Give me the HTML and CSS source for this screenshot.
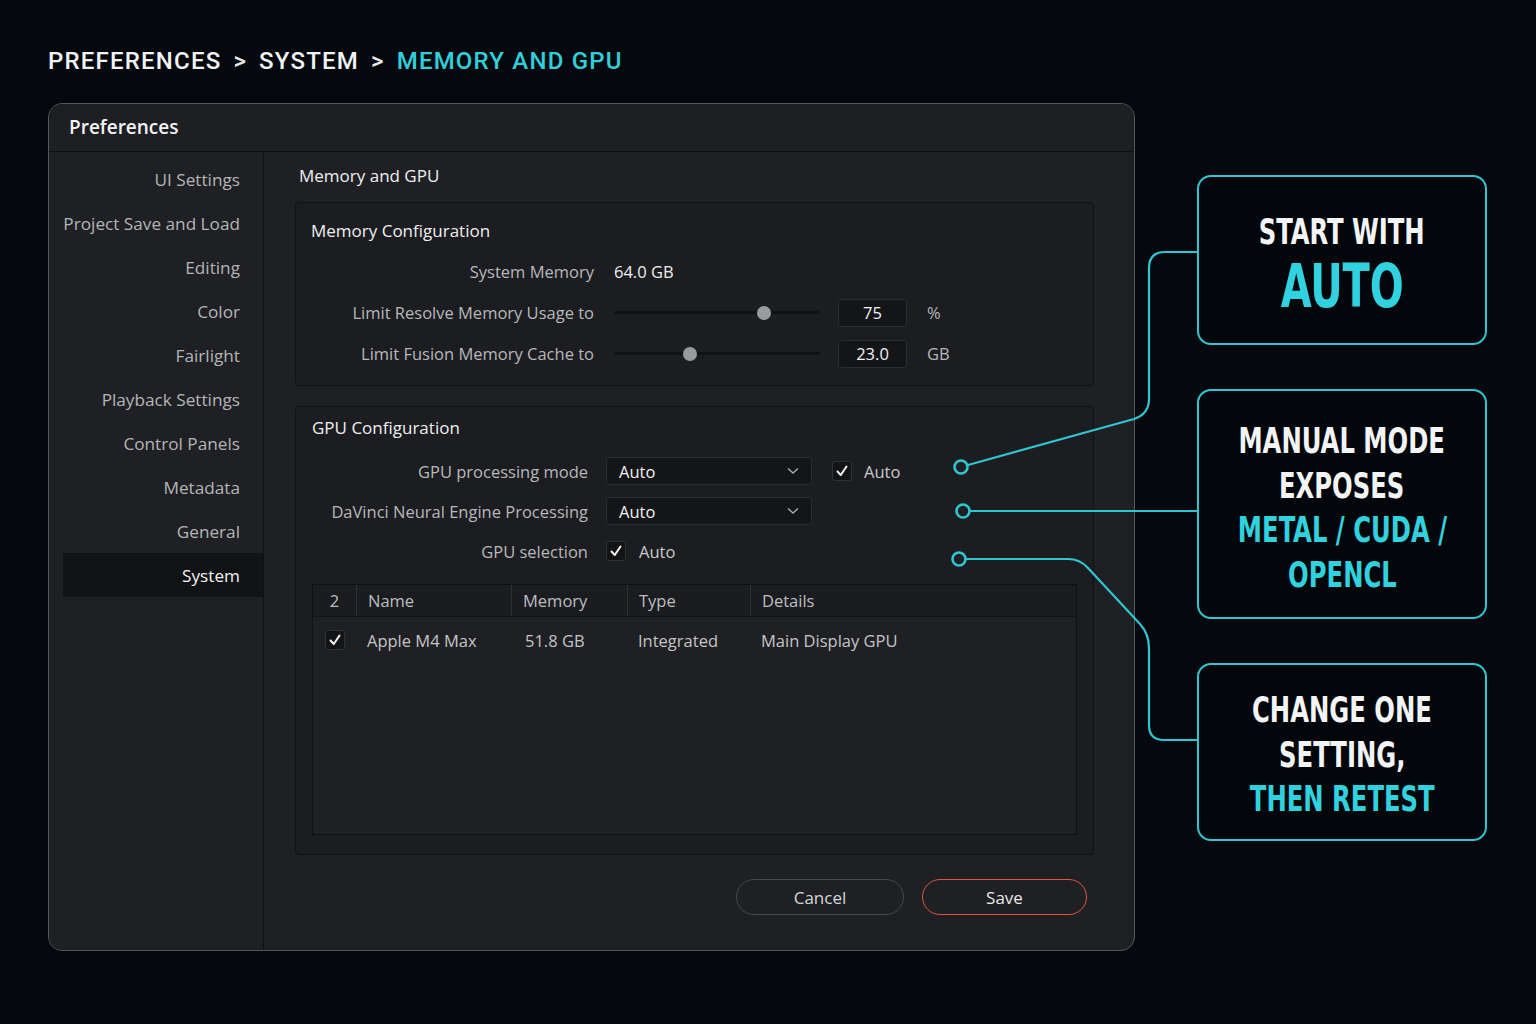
FILE: index.html
```html
<!DOCTYPE html>
<html lang="en">
<head>
<meta charset="utf-8">
<title>Preferences – Memory and GPU</title>
<link rel="stylesheet" href="styles.css">
</head>
<body>
<div class="page">
  <h1 class="crumbs">
    <span>PREFERENCES</span><span class="sep">&gt;</span><span>SYSTEM</span><span class="sep">&gt;</span><span class="current">MEMORY AND GPU</span>
  </h1>

  <div class="stage">
    <section class="dialog">
      <header class="dialog-title">Preferences</header>
      <div class="dialog-body">
        <nav class="sidebar">
          <div class="nav-item">UI Settings</div>
          <div class="nav-item">Project Save and Load</div>
          <div class="nav-item">Editing</div>
          <div class="nav-item">Color</div>
          <div class="nav-item">Fairlight</div>
          <div class="nav-item">Playback Settings</div>
          <div class="nav-item">Control Panels</div>
          <div class="nav-item">Metadata</div>
          <div class="nav-item">General</div>
          <div class="nav-item active">System</div>
        </nav>

        <main class="content">
          <h2 class="content-title">Memory and GPU</h2>

          <div class="group mem-group">
            <h3 class="group-title">Memory Configuration</h3>
            <div class="row mem-row">
              <span class="label">System Memory</span>
              <span class="value">64.0 GB</span>
            </div>
            <div class="row mem-row">
              <span class="label">Limit Resolve Memory Usage to</span>
              <div class="slider"><span class="thumb" style="left: 73%"></span></div>
              <span class="field">75</span>
              <span class="unit">%</span>
            </div>
            <div class="row mem-row">
              <span class="label">Limit Fusion Memory Cache to</span>
              <div class="slider"><span class="thumb" style="left: 37%"></span></div>
              <span class="field">23.0</span>
              <span class="unit">GB</span>
            </div>
          </div>

          <div class="group gpu-group">
            <h3 class="group-title">GPU Configuration</h3>
            <div class="row gpu-row">
              <span class="label">GPU processing mode</span>
              <div class="select"><span>Auto</span><svg class="chev" viewBox="0 0 12 8"><path d="M1 1.5 L6 6 L11 1.5"/></svg></div>
              <span class="check"><svg viewBox="0 0 14 14"><path d="M2.5 7.5 L5.8 11 L11.5 2.5"/></svg></span>
              <span class="check-label">Auto</span>
            </div>
            <div class="row gpu-row">
              <span class="label">DaVinci Neural Engine Processing</span>
              <div class="select"><span>Auto</span><svg class="chev" viewBox="0 0 12 8"><path d="M1 1.5 L6 6 L11 1.5"/></svg></div>
            </div>
            <div class="row gpu-row">
              <span class="label">GPU selection</span>
              <span class="check tight"><svg viewBox="0 0 14 14"><path d="M2.5 7.5 L5.8 11 L11.5 2.5"/></svg></span>
              <span class="check-label">Auto</span>
            </div>

            <div class="table">
              <div class="thead">
                <div class="cell c-idx">2</div>
                <div class="cell c-name">Name</div>
                <div class="cell c-mem">Memory</div>
                <div class="cell c-type">Type</div>
                <div class="cell c-det">Details</div>
              </div>
              <div class="trow">
                <div class="cell c-idx"><span class="check small"><svg viewBox="0 0 14 14"><path d="M2.5 7.5 L5.8 11 L11.5 2.5"/></svg></span></div>
                <div class="cell c-name">Apple M4 Max</div>
                <div class="cell c-mem pad">51.8 GB</div>
                <div class="cell c-type">Integrated</div>
                <div class="cell c-det">Main Display GPU</div>
              </div>
            </div>
          </div>

          <div class="actions">
            <button class="btn">Cancel</button>
            <button class="btn primary">Save</button>
          </div>
        </main>
      </div>
    </section>

    <aside class="callouts">
      <div class="callout c1">
        <p class="hl-white">START WITH</p>
        <p class="hl-cyan big">AUTO</p>
      </div>
      <div class="callout c2">
        <p class="hl-white">MANUAL MODE</p>
        <p class="hl-white">EXPOSES</p>
        <p class="hl-cyan">METAL / CUDA /</p>
        <p class="hl-cyan">OPENCL</p>
      </div>
      <div class="callout c3">
        <p class="hl-white">CHANGE ONE</p>
        <p class="hl-white">SETTING,</p>
        <p class="hl-cyan">THEN RETEST</p>
      </div>
    </aside>
  </div>

  <!-- leader lines joining settings to their notes -->
  <svg class="leaders" viewBox="0 0 1536 1024" width="1536" height="1024">
    <g fill="none" stroke="#2fc6d2" stroke-width="2.2" stroke-linecap="round" stroke-linejoin="round">
      <path d="M968 465 L1134 419 Q1149 414 1149 399 L1149 268 Q1149 252 1165 252 L1197 252"/>
      <path d="M970 511 L1197 511"/>
      <path d="M966 559 L1068 559 Q1080 559 1088 568 L1140 624 Q1149 634 1149 648 L1149 725 Q1149 740 1164 740 L1197 740"/>
    </g>
    <g fill="#1f2023" stroke="#2fc6d2" stroke-width="2.6">
      <circle cx="961" cy="467" r="6.5"/>
      <circle cx="963" cy="511" r="6.5"/>
      <circle cx="959" cy="559" r="6.5"/>
    </g>
  </svg>
</div>
</body>
</html>
```

FILE: styles.css
```css
* { box-sizing: border-box; }

html, body {
  margin: 0;
  padding: 0;
}

body {
  background: #05080d;
  font-family: "Open Sans", "Noto Sans", sans-serif;
  color: #e6e6e6;
}

.page {
  position: relative;
  width: 1536px;
  height: 1024px;
  padding: 45px 48px 0 48px;
}

/* breadcrumb */
.crumbs {
  margin: 0;
  height: 32px;
  font-family: "Roboto", "DejaVu Sans", sans-serif;
  font-weight: 500;
  font-size: 24px;
  line-height: 32px;
  letter-spacing: 1.2px;
  color: #f1f3f5;
  display: flex;
  gap: 12px;
}
.crumbs .current { color: #2fd0dc; }
.crumbs .sep { color: #e8e8e8; }

.stage {
  display: flex;
  align-items: flex-start;
  gap: 62px;
  margin-top: 26px;
}

/* dialog window */
.dialog {
  width: 1087px;
  height: 848px;
  background: #1f2023;
  border: 1.5px solid #55585d;
  border-radius: 14px;
  display: flex;
  flex-direction: column;
  overflow: hidden;
}

.dialog-title {
  height: 48px;
  flex: none;
  padding-left: 20px;
  padding-bottom: 1px;
  display: flex;
  align-items: center;
  font-weight: 600;
  font-size: 19px;
  color: #f4f4f4;
  background: #1e1f22;
  border-bottom: 1px solid #0e0f11;
}

.dialog-body {
  flex: 1;
  display: flex;
}

.sidebar {
  width: 215px;
  flex: none;
  border-right: 1px solid #0f1012;
  padding-top: 5px;
  background: #1f2023;
}

.nav-item {
  height: 44px;
  display: flex;
  align-items: center;
  justify-content: flex-end;
  padding-right: 23px;
  margin-left: 14px;
  font-size: 17.2px;
  white-space: nowrap;
  color: #b4b5b7;
}
.nav-item.active {
  background: #121315;
  color: #f3f3f3;
}

.content {
  flex: 1;
  padding: 11px 40px 0 31px;
  display: flex;
  flex-direction: column;
}

.content-title {
  margin: 0 0 13px 4px;
  font-weight: 400;
  font-size: 17px;
  line-height: 26px;
  color: #efefef;
}

.group {
  background: #1c1d20;
  border: 1px solid #0f1012;
  border-radius: 4px;
}

.group-title {
  margin: 0;
  font-weight: 400;
  font-size: 17px;
  line-height: 24px;
  color: #efefef;
  padding-left: 15px;
}

.mem-group {
  height: 184px;
  padding-top: 16px;
}
.mem-group .group-title { margin-bottom: 8px; }

.gpu-group {
  margin-top: 20px;
  height: 449px;
  padding: 9px 16px 0 16px;
}
.gpu-group .group-title { padding-left: 0; margin-bottom: 11px; }

.row {
  display: flex;
  align-items: center;
  font-size: 16.5px;
}
.label {
  color: #b7b8ba;
  text-align: right;
  flex: none;
}
.mem-row { height: 41px; }
.mem-row .label { width: 298px; margin-right: 20px; }
.value { color: #eeeeee; }

.slider {
  position: relative;
  width: 206px;
  height: 3px;
  background: #111214;
  border-radius: 2px;
  margin-right: 18px;
}
.thumb {
  position: absolute;
  top: 50%;
  width: 14px;
  height: 14px;
  margin: -7px 0 0 -7px;
  border-radius: 50%;
  background: #9a9b9d;
}

.field {
  width: 69px;
  height: 28px;
  background: #141517;
  border: 1px solid #2b2c30;
  border-radius: 3px;
  display: flex;
  align-items: center;
  justify-content: center;
  color: #f2f2f2;
  margin-right: 20px;
}
.unit { color: #b7b8ba; }

.gpu-row { height: 40px; }
.gpu-row .label { width: 276px; margin-right: 18px; }

.select {
  width: 206px;
  height: 28px;
  background: #141517;
  border: 1px solid #2b2c30;
  border-radius: 3px;
  display: flex;
  align-items: center;
  justify-content: space-between;
  padding: 0 12px 0 12px;
  color: #f0f0f0;
  margin-right: 20px;
}
.chev {
  width: 12px;
  height: 8px;
  fill: none;
  stroke: #a9aaac;
  stroke-width: 1.4;
}

.check {
  width: 20px;
  height: 20px;
  background: #131416;
  border: 1px solid #303135;
  border-radius: 3px;
  display: flex;
  align-items: center;
  justify-content: center;
  margin-right: 12px;
}
.check.tight { margin-right: 13px; }
.check svg {
  width: 14px;
  height: 14px;
  fill: none;
  stroke: #f5f5f5;
  stroke-width: 2;
  stroke-linecap: round;
  stroke-linejoin: round;
}
.check.small { margin: 0; }
.check-label { color: #c9cacc; }

/* GPU list */
.table {
  margin-top: 13px;
  height: 251px;
  border: 1px solid #0f1012;
  background: #1f2023;
  font-size: 16.5px;
}
.thead {
  height: 32px;
  display: flex;
  background: #1b1c1f;
  border-bottom: 1px solid #111214;
  color: #bdbec0;
}
.thead .cell + .cell { border-left: 1px solid #2e2f33; }
.trow {
  height: 46px;
  display: flex;
  color: #c4c5c7;
}
.cell {
  display: flex;
  align-items: center;
  padding-left: 11px;
  flex: none;
}
.c-idx { width: 43px; padding-left: 0; justify-content: center; }
.c-name { width: 155px; }
.c-mem { width: 116px; }
.c-mem.pad { padding-left: 14px; }
.c-type { width: 123px; }
.c-det { flex: 1; }

/* buttons */
.actions {
  display: flex;
  justify-content: flex-end;
  gap: 18px;
  margin-top: 24px;
  padding-right: 7px;
}
.btn {
  height: 36px;
  border-radius: 18px;
  background: transparent;
  font-family: "Open Sans", "Noto Sans", sans-serif;
  font-size: 17px;
  color: #d6d6d6;
  border: 1px solid #46484c;
  width: 168px;
}
.btn.primary {
  width: 165px;
  border: 1.8px solid #e2563f;
  color: #e8e8e8;
}

/* notes on the right */
.callouts {
  width: 290px;
  margin-top: 72px;
  display: flex;
  flex-direction: column;
  gap: 44px;
}
.callout {
  border: 2.2px solid #2fc6d2;
  border-radius: 14px;
  background: #03070c;
  display: flex;
  flex-direction: column;
  align-items: center;
  justify-content: center;
  font-family: "DejaVu Sans Condensed", "DejaVu Sans", sans-serif;
  font-weight: 700;
}
.callout p {
  margin: 0;
  font-size: 36px;
  line-height: 44.5px;
  text-align: center;
  white-space: nowrap;
  transform: scaleX(0.75);
}
.c1 { height: 170px; padding-top: 8px; }
.c2 { height: 230px; padding-top: 8px; }
.c3 { height: 178px; padding-top: 6px; }
.hl-white { color: #f3f4f5; }
.hl-cyan { color: #2fd2de; }
.c1 .big { font-size: 60px; line-height: 64px; transform: scaleX(0.74); }

.leaders {
  position: absolute;
  left: 0;
  top: 0;
  pointer-events: none;
}
```
